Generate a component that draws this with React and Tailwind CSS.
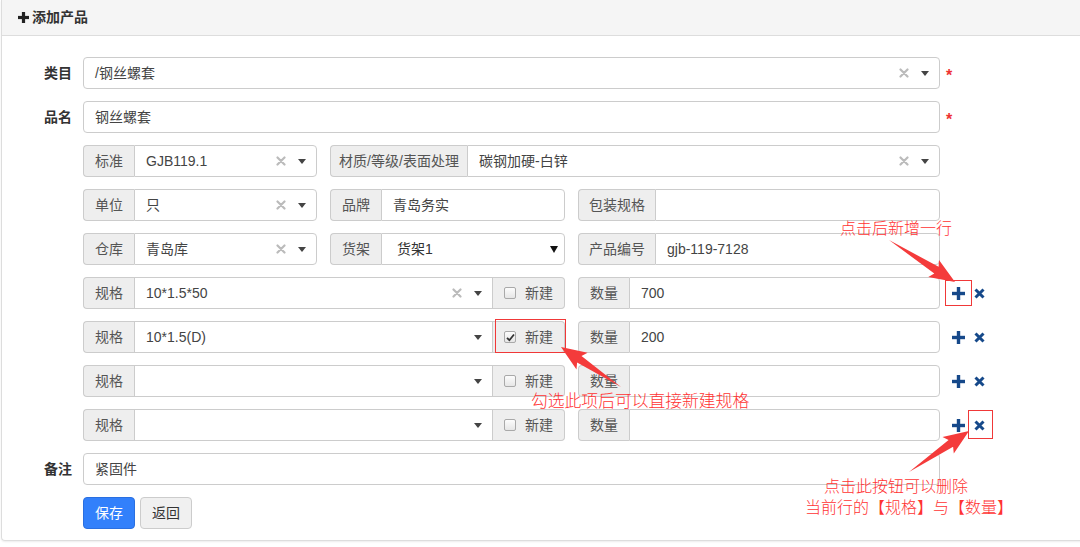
import React from "react";

const FONT = { fontFamily: '"Liberation Sans", Arial, "Noto Sans CJK SC", sans-serif' };

function Caret() {
  return (
    <svg width="8" height="5" viewBox="0 0 8 5" className="shrink-0">
      <polygon points="0,0 8,0 4,5" fill="#444" />
    </svg>
  );
}

function Clear() {
  return (
    <svg width="10" height="10" viewBox="0 0 10 10" className="shrink-0">
      <path d="M1.5 1.5 L8.5 8.5 M8.5 1.5 L1.5 8.5" stroke="#bbb" strokeWidth="2.2" strokeLinecap="round" />
    </svg>
  );
}

function Addon({ children, w, right = false }) {
  return (
    <div
      className={
        "shrink-0 flex items-center justify-center bg-[#eee] border border-[#ccc] text-[#555] text-[14px] " +
        w +
        (right ? " border-l-0 rounded-r-[4px]" : " border-r-0 rounded-l-[4px]")
      }
    >
      {children}
    </div>
  );
}

function Select2({ value, clear = true, mid = false }) {
  return (
    <div
      className={
        "flex-1 min-w-0 flex items-center bg-white border border-[#ccc] pl-[11px] pr-[10px] text-[14px] text-[#444] " +
        (mid ? "" : "rounded-r-[4px]")
      }
    >
      <span className="flex-1 truncate">{value}</span>
      {clear && value ? <span className="mr-[12px] flex items-center"><Clear /></span> : null}
      <Caret />
    </div>
  );
}

function TextBox({ value, rounded = "rounded-r-[4px]" }) {
  return (
    <div className={"flex-1 min-w-0 flex items-center bg-white border border-[#ccc] pl-[11px] text-[14px] text-[#444] " + rounded}>
      {value}
    </div>
  );
}

function Checkbox({ checked }) {
  return (
    <span className="w-[12px] h-[12px] rounded-[2px] border border-[#a9a9a9] bg-gradient-to-b from-[#fcfcfc] to-[#e6e6e6] flex items-center justify-center shrink-0">
      {checked ? (
        <svg width="9" height="9" viewBox="0 0 9 9">
          <path d="M1 4.8 L3.4 7.2 L8 1.5" stroke="#333" strokeWidth="1.8" fill="none" />
        </svg>
      ) : null}
    </span>
  );
}

function NewAddon({ checked }) {
  return (
    <div className="shrink-0 w-[72px] flex items-center justify-center gap-[9px] bg-[#eee] border border-[#ccc] border-l-0 rounded-r-[4px] text-[#555] text-[14px]">
      <Checkbox checked={checked} />
      <span>新建</span>
    </div>
  );
}

function PlusIcon() {
  return (
    <svg width="13" height="13" viewBox="0 0 13 13">
      <rect x="0" y="4.8" width="13" height="3.4" fill="#16498a" />
      <rect x="4.8" y="0" width="3.4" height="13" fill="#16498a" />
    </svg>
  );
}

function XIcon() {
  return (
    <svg width="11" height="11" viewBox="0 0 11 11">
      <path d="M1.5 1.5 L9.5 9.5 M9.5 1.5 L1.5 9.5" stroke="#16498a" strokeWidth="3" />
    </svg>
  );
}

function SpecRow({ value, qty, checked, clear }) {
  return (
    <div className="flex items-center h-[32px]">
      <div className="flex w-[482px] h-full">
        <Addon w="w-[51px]">规格</Addon>
        <Select2 value={value} clear={clear} mid />
        <NewAddon checked={checked} />
      </div>
      <div className="flex w-[362px] h-full ml-[13px]">
        <Addon w="w-[51px]">数量</Addon>
        <TextBox value={qty} />
      </div>
      <div className="flex items-center ml-[12px] gap-[9px]">
        <PlusIcon />
        <XIcon />
      </div>
    </div>
  );
}

function arrowPoints(x1, y1, x2, y2, headLen = 22, headW = 10, shaftW = 4) {
  const dx = x2 - x1, dy = y2 - y1;
  const L = Math.hypot(dx, dy);
  const ux = dx / L, uy = dy / L;
  const nx = -uy, ny = ux;
  const bx = x2 - ux * headLen, by = y2 - uy * headLen;
  const wx = x2 - ux * headLen * 1.15, wy = y2 - uy * headLen * 1.15;
  const pts = [
    [x1, y1],
    [bx + nx * shaftW, by + ny * shaftW],
    [wx + nx * headW, wy + ny * headW],
    [x2, y2],
    [wx - nx * headW, wy - ny * headW],
    [bx - nx * shaftW, by - ny * shaftW],
  ];
  return pts.map((p) => p[0].toFixed(1) + "," + p[1].toFixed(1)).join(" ");
}

const ANNO = { fontFamily: '"Noto Sans CJK SC", sans-serif', fontWeight: 300 };

export default function App() {
  return (
    <div className="relative w-[1080px] h-[547px] overflow-hidden bg-white" style={FONT}>
      <div className="ml-[1px] w-[1100px] border border-t-0 border-[#ddd] rounded-b-[4px] shadow-[0_1px_2px_rgba(0,0,0,0.08)]">
        <div className="h-[36px] bg-[#f5f5f5] border-b border-[#ddd] flex items-center pl-[16px] text-[14px] font-bold text-[#333] gap-[3px]">
          <svg width="11" height="11" viewBox="0 0 11 11">
            <rect x="0" y="3.9" width="11" height="3.2" fill="#222" />
            <rect x="3.9" y="0" width="3.2" height="11" fill="#222" />
          </svg>
          <span>添加产品</span>
        </div>
        <div className="pt-[21px] pb-[11px] flex flex-col gap-[12px] text-[14px] text-[#333]">
          {/* 类目 */}
          <div className="flex items-center h-[32px]">
            <div className="w-[70px] text-right font-bold">类目</div>
            <div className="ml-[11px] w-[857px] h-full flex">
              <div className="flex-1 flex items-center bg-white border border-[#ccc] rounded-[4px] pl-[11px] pr-[10px] text-[#444]">
                <span className="flex-1">/钢丝螺套</span>
                <span className="mr-[12px] flex items-center"><Clear /></span>
                <Caret />
              </div>
            </div>
            <span className="ml-[6px] text-[#e33] font-bold text-[16px] translate-y-[3px]">*</span>
          </div>
          {/* 品名 */}
          <div className="flex items-center h-[32px]">
            <div className="w-[70px] text-right font-bold">品名</div>
            <div className="ml-[11px] w-[857px] h-full flex">
              <TextBox value="钢丝螺套" rounded="rounded-[4px]" />
            </div>
            <span className="ml-[6px] text-[#e33] font-bold text-[16px] translate-y-[3px]">*</span>
          </div>
          {/* grid rows */}
          <div className="ml-[81px] w-[857px] grid grid-cols-[234px_235px_362px] gap-x-[13px] gap-y-[12px] auto-rows-[32px]">
            <div className="flex">
              <Addon w="w-[51px]">标准</Addon>
              <Select2 value="GJB119.1" />
            </div>
            <div className="flex col-span-2">
              <Addon w="w-[137px]">材质/等级/表面处理</Addon>
              <Select2 value="碳钢加硬-白锌" />
            </div>

            <div className="flex">
              <Addon w="w-[51px]">单位</Addon>
              <Select2 value="只" />
            </div>
            <div className="flex">
              <Addon w="w-[51px]">品牌</Addon>
              <TextBox value="青岛务实" />
            </div>
            <div className="flex">
              <Addon w="w-[77px]">包装规格</Addon>
              <TextBox value="" />
            </div>

            <div className="flex">
              <Addon w="w-[51px]">仓库</Addon>
              <Select2 value="青岛库" />
            </div>
            <div className="flex">
              <Addon w="w-[51px]">货架</Addon>
              <div className="flex-1 flex items-center bg-white border border-[#ccc] rounded-r-[4px] pl-[15px] pr-[6px] text-[#333]">
                <span className="flex-1">货架1</span>
                <svg width="8" height="7" viewBox="0 0 8 7"><polygon points="0,0 8,0 4,7" fill="#111" /></svg>
              </div>
            </div>
            <div className="flex">
              <Addon w="w-[77px]">产品编号</Addon>
              <TextBox value="gjb-119-7128" />
            </div>
          </div>
          <div className="ml-[81px] flex flex-col gap-[12px]">
            <SpecRow value="10*1.5*50" qty="700" clear />
            <SpecRow value="10*1.5(D)" qty="200" checked clear={false} />
            <SpecRow value="" qty="" />
            <SpecRow value="" qty="" />
          </div>
          {/* 备注 */}
          <div className="flex items-center h-[32px]">
            <div className="w-[70px] text-right font-bold">备注</div>
            <div className="ml-[11px] w-[857px] h-full flex">
              <TextBox value="紧固件" rounded="rounded-[4px]" />
            </div>
          </div>
          <div className="ml-[81px] flex gap-[5px] h-[32px]">
            <button className="w-[52px] h-full rounded-[4px] bg-[#3280fb] border border-[#2a6fe0] text-white text-[14px]">保存</button>
            <button className="w-[52px] h-full rounded-[4px] bg-[#f0f0f0] border border-[#ccc] text-[#333] text-[14px]">返回</button>
          </div>
        </div>
      </div>

      {/* annotations */}
      <svg className="absolute inset-0 pointer-events-none" width="1080" height="547">
        <rect x="945.5" y="280.5" width="26" height="25" fill="none" stroke="#f03838" strokeWidth="1" />
        <rect x="495.5" y="319.5" width="70" height="33" fill="none" stroke="#f03838" strokeWidth="1" />
        <rect x="968.5" y="410.5" width="24" height="28" fill="none" stroke="#f03838" strokeWidth="1" />
        <polygon points={arrowPoints(889, 240, 955, 282)} fill="#f43b3b" />
        <polygon points={arrowPoints(621, 387, 561, 347)} fill="#f43b3b" />
        <polygon points={arrowPoints(909, 472, 969, 431)} fill="#f43b3b" />
      </svg>
      <div className="absolute left-[840px] top-[217px] text-[16px] leading-[20px] text-[#ff3333] whitespace-nowrap" style={ANNO}>点击后新增一行</div>
      <div className="absolute left-[531px] top-[390px] text-[16.8px] leading-[20px] text-[#ff3333] whitespace-nowrap" style={ANNO}>勾选此项后可以直接新建规格</div>
      <p className="absolute left-[805px] top-[475px] text-[16px] leading-[21px] text-[#ff3333] whitespace-nowrap" style={ANNO}>
        <span className="pl-[19px]">点击此按钮可以删除</span>
        <br />
        当前行的【规格】与【数量】
      </p>
    </div>
  );
}
